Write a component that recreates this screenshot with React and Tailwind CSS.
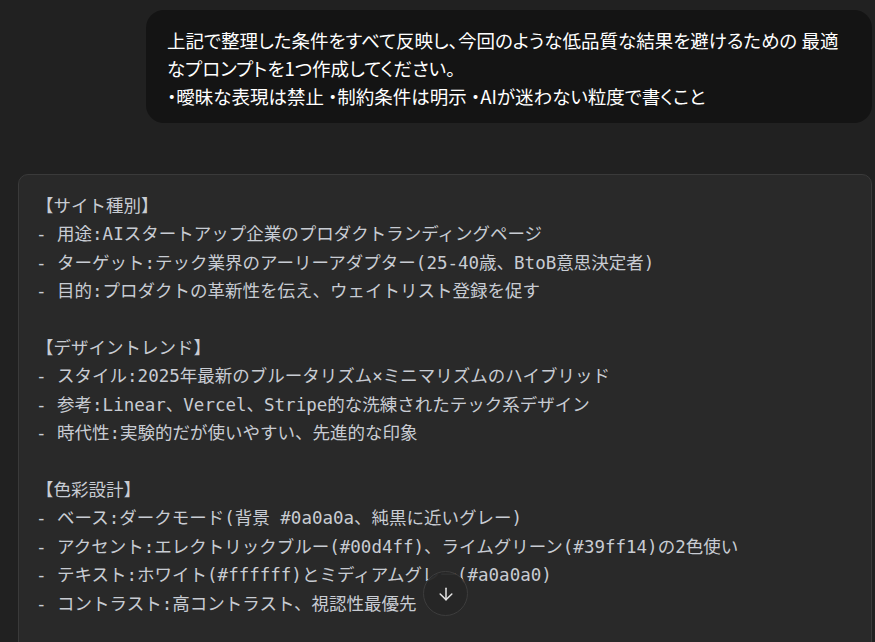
import React from 'react'
import { ArrowDown } from 'lucide-react'

// Lines of the prompt shown in the code block
const promptLines = [
  '【サイト種別】',
  '- 用途:AIスタートアップ企業のプロダクトランディングページ',
  '- ターゲット:テック業界のアーリーアダプター(25-40歳、BtoB意思決定者)',
  '- 目的:プロダクトの革新性を伝え、ウェイトリスト登録を促す',
  '',
  '【デザイントレンド】',
  '- スタイル:2025年最新のブルータリズム×ミニマリズムのハイブリッド',
  '- 参考:Linear、Vercel、Stripe的な洗練されたテック系デザイン',
  '- 時代性:実験的だが使いやすい、先進的な印象',
  '',
  '【色彩設計】',
  '- ベース:ダークモード(背景 #0a0a0a、純黒に近いグレー)',
  '- アクセント:エレクトリックブルー(#00d4ff)、ライムグリーン(#39ff14)の2色使い',
  '- テキスト:ホワイト(#ffffff)とミディアムグレー(#a0a0a0)',
  '- コントラスト:高コントラスト、視認性最優先',
  '',
]

const userLines = [
  '上記で整理した条件をすべて反映し、今回のような低品質な結果を避けるための 最適',
  'なプロンプトを1つ作成してください。',
  '・曖昧な表現は禁止 ・制約条件は明示 ・AIが迷わない粒度で書くこと',
]

export default function App() {
  return (
    <div className="relative h-[642px] overflow-hidden bg-[#212121] pl-[18px] pr-[3px] pt-[10px]">
      {/* User message bubble */}
      <div className="flex justify-end">
        <div
          className="w-[726px] rounded-[18px] bg-[#141414] pl-[21px] pr-5 pt-4 pb-[13px] text-[18.5px] leading-[28px] text-white"
          style={{ fontFamily: '"Noto Sans CJK JP", "Noto Sans", sans-serif', fontFeatureSettings: '"palt"' }}
        >
          {userLines.map((line, i) => (
            <div key={i} className="whitespace-pre">{line}</div>
          ))}
        </div>
      </div>

      {/* Assistant code block */}
      <div className="mt-[51px] rounded-[10px] border border-[#3a3a3a] bg-[#292929] pl-[17px] pt-[17px] pb-6">
        <div
          className="text-[17.5px] leading-[28.4px] text-[#c8ccd3]"
          style={{ fontFamily: '"DejaVu Sans Mono", "Noto Sans CJK JP", monospace' }}
        >
          {promptLines.map((line, i) => (
            <div key={i} className="whitespace-pre">{line || ' '}</div>
          ))}
        </div>
      </div>

      {/* Scroll to bottom button */}
      <button
        className="absolute left-[423px] top-[571px] flex h-[45px] w-[45px] items-center justify-center rounded-full border border-[#3d3d3d] bg-[#262626]/95 text-[#e5e5e5]"
        aria-label="Scroll to bottom"
      >
        <ArrowDown size={20} strokeWidth={1.8} />
      </button>
    </div>
  )
}
